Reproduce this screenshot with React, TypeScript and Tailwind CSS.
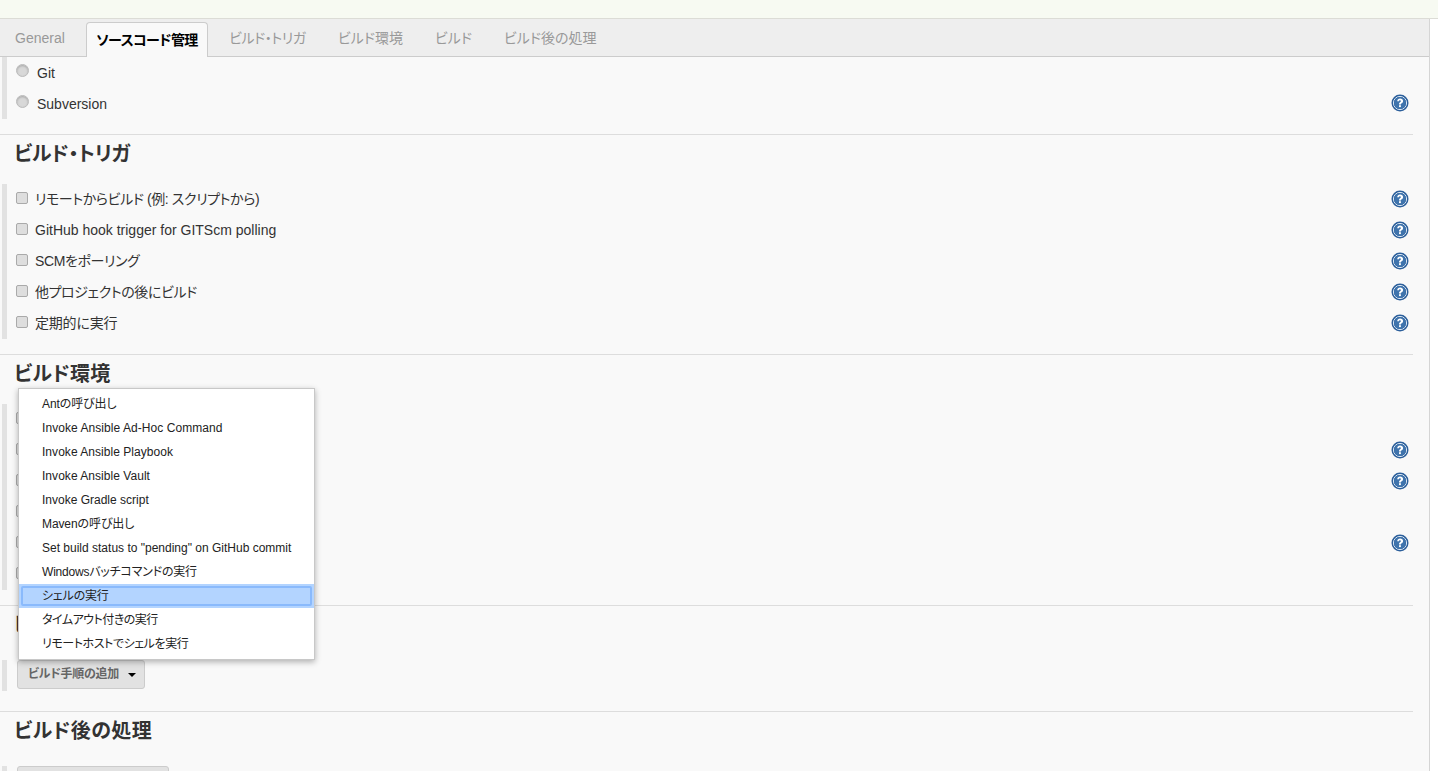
const jp = "font-['Liberation_Sans','Noto_Sans_CJK_JP',sans-serif] [font-feature-settings:'palt']";

const HelpIcon = () => (
  <svg width="18" height="18" viewBox="0 0 18 18" className="shrink-0 -translate-y-[1px]">
    <circle cx="9" cy="9" r="8.5" fill="#2c5f9b" />
    <circle cx="9" cy="9" r="6.6" fill="none" stroke="#dbe7f3" strokeWidth="1" />
    <circle cx="9" cy="9" r="5.9" fill="#3f74ad" />
    <path d="M6.2 7.2C6.3 5.4 7.5 4.4 9.1 4.4c1.8 0 3 1 3 2.5 0 1.2-.7 1.8-1.4 2.3-.6.4-.8.7-.8 1.3H8c0-1.2.3-1.7 1-2.2.6-.4.9-.8.9-1.3 0-.5-.4-.8-.9-.8-.6 0-1 .4-1 1z" fill="#fff" />
    <rect x="8" y="11.2" width="1.9" height="1.9" fill="#fff" />
  </svg>
);

const Radio = () => (
  <span className="block h-[13px] w-[13px] rounded-full border border-[#bbbbbb] bg-[#d8d8d8] shadow-[inset_0_1px_2px_#a8a8a8]" />
);

const Check = () => (
  <span className="block h-[12px] w-[12px] rounded-[2px] border border-[#aaaaaa] bg-[#dedede]" />
);

const Row = ({ label, help, radio, tight }: { label?: string; help?: boolean; radio?: boolean; tight?: string }) => (
  <div className="flex h-[31px] items-center pr-[20px]">
    <div className="flex w-[28px] justify-center pl-[2px] -translate-y-[2px]">{radio ? <Radio /> : <Check />}</div>
    <span className={`${radio ? "translate-y-[1px] pl-[2px]" : ""} flex-1 text-[14px] text-[#333333] ${tight ?? ""}`}>{label}</span>
    {help && <HelpIcon />}
  </div>
);

const Section = ({ children, className }: { children: React.ReactNode; className: string }) => (
  <div className={`ml-[2px] border-l-[5px] border-[#e2e2e2] ${className}`}>{children}</div>
);

const Heading = ({ children, className }: { children: React.ReactNode; className: string }) => (
  <h2 className={`pl-[14px] text-[20px] font-bold leading-[24px] text-[#333333] ${className}`}>{children}</h2>
);

const Divider = ({ className }: { className: string }) => (
  <div className={`mr-[16px] h-px bg-[#dddddd] ${className}`} />
);

const tabs = [
  { label: "ビルド・トリガ", tight: "tracking-[-0.4px]" },
  { label: "ビルド環境", tight: "" },
  { label: "ビルド", tight: "" },
  { label: "ビルド後の処理", tight: "" },
];

const menu = [
  { label: "Antの呼び出し", tight: "tracking-[-0.1px]" },
  { label: "Invoke Ansible Ad-Hoc Command", tight: "tracking-[0.06px]" },
  { label: "Invoke Ansible Playbook", tight: "tracking-[0.04px]" },
  { label: "Invoke Ansible Vault", tight: "tracking-[0.04px]" },
  { label: "Invoke Gradle script", tight: "" },
  { label: "Mavenの呼び出し", tight: "tracking-[-0.1px]" },
  { label: 'Set build status to "pending" on GitHub commit', tight: "" },
  { label: "Windowsバッチコマンドの実行", tight: "tracking-[-0.2px]" },
  { label: "シェルの実行", tight: "tracking-[-0.2px]" },
  { label: "タイムアウト付きの実行", tight: "tracking-[-0.5px]" },
  { label: "リモートホストでシェルを実行", tight: "tracking-[-0.43px]" },
];

const AddButton = ({ label, className }: { label: string; className: string }) => (
  <button className={`ml-[10px] flex items-center rounded-[3px] border border-[#cccccc] bg-[#e2e2e2] text-[12px] font-bold text-[#666666] ${className}`}>
    {label}
  </button>
);

export default function App() {
  return (
    <div className={`${jp} relative h-[771px] w-[1438px] overflow-hidden bg-white`}>
      <div className="h-[19px] border-b border-[#dcdcd6] bg-[#f7faf2]" />
      <div className="h-[752px] w-[1430px] border-r border-[#d5d5d5] bg-[#f9f9f9]">
        <div className="flex h-[38px] items-end border-b border-[#cccccc] bg-[#eeeeee] pl-[4px]">
          <div className="flex h-[37px] w-[72px] translate-y-[1px] items-center justify-center text-[14px] text-[#999999]">General</div>
          <div className="relative top-px mx-[10px] flex h-[35px] w-[122px] items-center justify-center rounded-t-[4px] border border-b-0 border-[#cccccc] bg-[#f9f9f9] text-[14px] font-bold tracking-[-0.6px] text-black">
            ソースコード管理
          </div>
          <div className="flex h-[37px] translate-y-[1px] items-center gap-[32px] pl-[11px] text-[14px] text-[#999999]">
            {tabs.map((t) => (
              <span key={t.label} className={t.tight}>
                {t.label}
              </span>
            ))}
          </div>
        </div>

        <Section className="h-[62px]">
          <Row radio label="Git" />
          <Row radio label="Subversion" help />
        </Section>
        <Divider className="mt-[15px]" />
        <Heading className="mt-[7px] tracking-[-0.3px]">ビルド・トリガ</Heading>
        <Section className="mt-[18px] h-[155px]">
          <Row label="リモートからビルド (例: スクリプトから)" help tight="tracking-[-0.4px]" />
          <Row label="GitHub hook trigger for GITScm polling" help />
          <Row label="SCMをポーリング" help tight="tracking-[-0.4px]" />
          <Row label="他プロジェクトの後にビルド" help tight="tracking-[-0.4px]" />
          <Row label="定期的に実行" help tight="tracking-[-0.2px]" />
        </Section>
        <Divider className="mt-[15px]" />
        <Heading className="mt-[7px] tracking-[0.2px]">ビルド環境</Heading>
        <Section className="mt-[18px] h-[186px]">
          <Row />
          <Row help />
          <Row help />
          <Row />
          <Row help />
          <Row />
        </Section>
        <Divider className="mt-[15px]" />
        <Heading className="mt-[7px]">ビルド</Heading>
        <Section className="mt-[23px] h-[31px]">
          <AddButton label="ビルド手順の追加" className="h-[29px] w-[128px] pb-[2px] pl-[10px] tracking-[-0.25px]" />
        </Section>
        <Divider className="mt-[20px]" />
        <Heading className="mt-[7px] tracking-[0.45px]">ビルド後の処理</Heading>
        <Section className="mt-[23px] h-[31px]">
          <AddButton label="" className="h-[29px] w-[152px]" />
        </Section>
      </div>

      <span className="absolute left-[128px] top-[673px] h-0 w-0 border-x-[4px] border-t-[4px] border-x-transparent border-t-black" />

      <div className="absolute left-[18px] top-[388px] w-[297px] border border-[#c8c8c8] bg-white py-[3px] shadow-[0_2px_6px_rgba(0,0,0,0.3)]">
        {menu.map((m) => (
          <div key={m.label} className={m.label === "シェルの実行" ? "h-[24px] bg-[#b3d4ff] p-[2px]" : "h-[24px]"}>
            <div
              className={`${
                m.label === "シェルの実行"
                  ? "flex h-[20px] items-center rounded-[2px] border-2 border-[#8abafc] pl-[19px] text-[12px] text-[#222222]"
                  : "flex h-[24px] items-center pl-[23px] text-[12px] text-[#222222]"
              } ${m.tight}`}
            >
              {m.label}
            </div>
          </div>
        ))}
      </div>
    </div>
  );
}
